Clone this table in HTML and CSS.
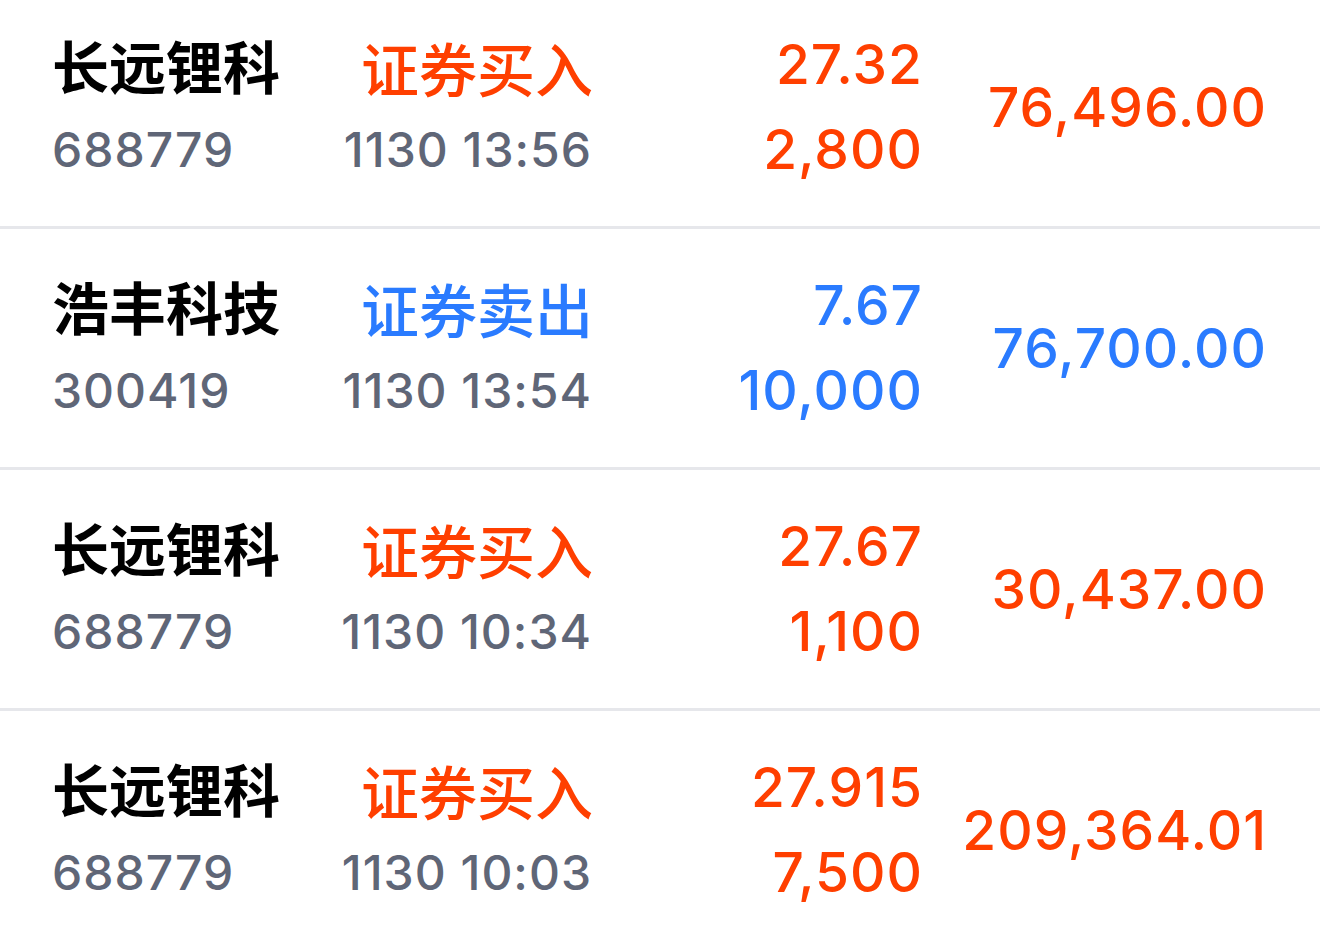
FILE: index.html
```html
<!DOCTYPE html>
<html lang="zh-CN">
<head>
<meta charset="utf-8">
<title>成交明细</title>
<link rel="stylesheet" href="styles.css">
</head>
<body>
<div class="list">
  <div class="row">
    <div class="col col-name"><div class="line name">长远锂科</div><div class="line code">688779</div></div>
    <div class="col col-act"><div class="line act buy">证券买入</div><div class="line code">1130 13:56</div></div>
    <div class="col col-price"><div class="line num buy">27.32</div><div class="line num buy">2,800</div></div>
    <div class="col col-amt"><div class="amt buy">76,496.00</div></div>
  </div>
  <div class="row">
    <div class="col col-name"><div class="line name">浩丰科技</div><div class="line code">300419</div></div>
    <div class="col col-act"><div class="line act sell">证券卖出</div><div class="line code">1130 13:54</div></div>
    <div class="col col-price"><div class="line num sell">7.67</div><div class="line num sell">10,000</div></div>
    <div class="col col-amt"><div class="amt sell">76,700.00</div></div>
  </div>
  <div class="row">
    <div class="col col-name"><div class="line name">长远锂科</div><div class="line code">688779</div></div>
    <div class="col col-act"><div class="line act buy">证券买入</div><div class="line code">1130 10:34</div></div>
    <div class="col col-price"><div class="line num buy">27.67</div><div class="line num buy">1,100</div></div>
    <div class="col col-amt"><div class="amt buy">30,437.00</div></div>
  </div>
  <div class="row">
    <div class="col col-name"><div class="line name">长远锂科</div><div class="line code">688779</div></div>
    <div class="col col-act"><div class="line act buy">证券买入</div><div class="line code">1130 10:03</div></div>
    <div class="col col-price"><div class="line num buy">27.915</div><div class="line num buy">7,500</div></div>
    <div class="col col-amt"><div class="amt buy">209,364.01</div></div>
  </div>
</div>
</body>
</html>
```
FILE: styles.css
```css
html, body {
  margin: 0;
  padding: 0;
  background: #ffffff;
  overflow: hidden;
}
body {
  width: 1320px;
  height: 946px;
  font-family: "Inter", "Noto Sans CJK SC", sans-serif;
}
.list {
  margin-top: -12px;
  display: flex;
  flex-direction: column;
}
.row {
  height: 238px;
  border-bottom: 3px solid #e6e7eb;
  display: grid;
  grid-template-columns: 240px 300px 331px 1fr;
  align-items: center;
  padding: 0 53px 0 52px;
}
.col {
  display: flex;
  flex-direction: column;
}
.col-act, .col-price, .col-amt {
  align-items: flex-end;
}
.line {
  height: 85px;
  line-height: 85px;
  white-space: nowrap;
}
.name {
  font-family: "Noto Sans CJK SC", sans-serif;
  font-size: 57px;
  font-weight: 700;
  color: #000000;
}
.act {
  font-family: "Noto Sans CJK SC", sans-serif;
  font-size: 58px;
  font-weight: 500;
  padding-top: 6px;
  height: 79px;
  line-height: 79px;
}
.col-act .act {
  margin-right: -1px;
}
.code {
  font-size: 48px;
  font-weight: 500;
  color: #5f6677;
  letter-spacing: 1px;
}
.num {
  font-size: 55px;
  font-weight: 500;
  letter-spacing: 1px;
}
.amt {
  font-size: 55px;
  font-weight: 500;
  line-height: 70px;
  letter-spacing: 1px;
  white-space: nowrap;
}
.buy { color: #ff3f00; }
.sell { color: #2a7bff; }
```
